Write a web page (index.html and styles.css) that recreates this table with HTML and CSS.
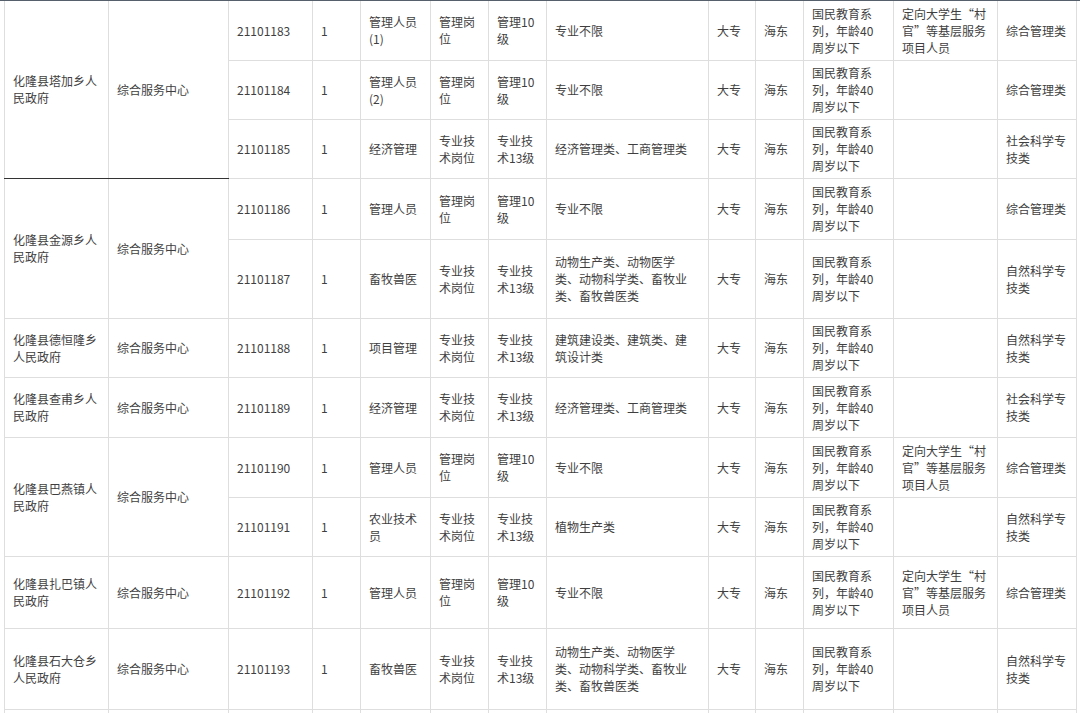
FILE: index.html
```html
<!DOCTYPE html>
<html lang="zh-CN">
<head>
<meta charset="utf-8">
<title>岗位表</title>
<link rel="stylesheet" href="styles.css">
</head>
<body>
<div class="topbar"></div>
<div class="wrap">
<table class="jobs">
<colgroup>
<col class="c1"><col class="c2"><col class="c3"><col class="c4"><col class="c5"><col class="c6"><col class="c7"><col class="c8"><col class="c9"><col class="c10"><col class="c11"><col class="c12"><col class="c13">
</colgroup>
<tbody>
<tr class="h59">
<td rowspan="3" class="grp-end">化隆县塔加乡人民政府</td>
<td rowspan="3" class="grp-end">综合服务中心</td>
<td>21101183</td><td>1</td><td>管理人员(1)</td><td>管理岗位</td><td>管理10级</td><td class="major">专业不限</td><td>大专</td><td>海东</td><td class="req">国民教育系列，年龄40周岁以下</td><td>定向大学生“村官”等基层服务项目人员</td><td>综合管理类</td>
</tr>
<tr class="h59">
<td>21101184</td><td>1</td><td>管理人员(2)</td><td>管理岗位</td><td>管理10级</td><td class="major">专业不限</td><td>大专</td><td>海东</td><td class="req">国民教育系列，年龄40周岁以下</td><td></td><td>综合管理类</td>
</tr>
<tr class="h59">
<td>21101185</td><td>1</td><td>经济管理</td><td>专业技术岗位</td><td>专业技术13级</td><td class="major">经济管理类、工商管理类</td><td>大专</td><td>海东</td><td class="req">国民教育系列，年龄40周岁以下</td><td></td><td>社会科学专技类</td>
</tr>
<tr class="h61">
<td rowspan="2">化隆县金源乡人民政府</td>
<td rowspan="2">综合服务中心</td>
<td>21101186</td><td>1</td><td>管理人员</td><td>管理岗位</td><td>管理10级</td><td class="major">专业不限</td><td>大专</td><td>海东</td><td class="req">国民教育系列，年龄40周岁以下</td><td></td><td>综合管理类</td>
</tr>
<tr class="h79">
<td>21101187</td><td>1</td><td>畜牧兽医</td><td>专业技术岗位</td><td>专业技术13级</td><td class="major">动物生产类、动物医学类、动物科学类、畜牧业类、畜牧兽医类</td><td>大专</td><td>海东</td><td class="req">国民教育系列，年龄40周岁以下</td><td></td><td>自然科学专技类</td>
</tr>
<tr class="h59">
<td>化隆县德恒隆乡人民政府</td>
<td>综合服务中心</td>
<td>21101188</td><td>1</td><td>项目管理</td><td>专业技术岗位</td><td>专业技术13级</td><td class="major">建筑建设类、建筑类、建筑设计类</td><td>大专</td><td>海东</td><td class="req">国民教育系列，年龄40周岁以下</td><td></td><td>自然科学专技类</td>
</tr>
<tr class="h60">
<td>化隆县查甫乡人民政府</td>
<td>综合服务中心</td>
<td>21101189</td><td>1</td><td>经济管理</td><td>专业技术岗位</td><td>专业技术13级</td><td class="major">经济管理类、工商管理类</td><td>大专</td><td>海东</td><td class="req">国民教育系列，年龄40周岁以下</td><td></td><td>社会科学专技类</td>
</tr>
<tr class="h60">
<td rowspan="2">化隆县巴燕镇人民政府</td>
<td rowspan="2">综合服务中心</td>
<td>21101190</td><td>1</td><td>管理人员</td><td>管理岗位</td><td>管理10级</td><td class="major">专业不限</td><td>大专</td><td>海东</td><td class="req">国民教育系列，年龄40周岁以下</td><td>定向大学生“村官”等基层服务项目人员</td><td>综合管理类</td>
</tr>
<tr class="h59">
<td>21101191</td><td>1</td><td>农业技术员</td><td>专业技术岗位</td><td>专业技术13级</td><td class="major">植物生产类</td><td>大专</td><td>海东</td><td class="req">国民教育系列，年龄40周岁以下</td><td></td><td>自然科学专技类</td>
</tr>
<tr class="h72">
<td>化隆县扎巴镇人民政府</td>
<td>综合服务中心</td>
<td>21101192</td><td>1</td><td>管理人员</td><td>管理岗位</td><td>管理10级</td><td class="major">专业不限</td><td>大专</td><td>海东</td><td class="req">国民教育系列，年龄40周岁以下</td><td>定向大学生“村官”等基层服务项目人员</td><td>综合管理类</td>
</tr>
<tr class="h81">
<td>化隆县石大仓乡人民政府</td>
<td>综合服务中心</td>
<td>21101193</td><td>1</td><td>畜牧兽医</td><td>专业技术岗位</td><td>专业技术13级</td><td class="major">动物生产类、动物医学类、动物科学类、畜牧业类、畜牧兽医类</td><td>大专</td><td>海东</td><td class="req">国民教育系列，年龄40周岁以下</td><td></td><td>自然科学专技类</td>
</tr>
<tr class="h59">
<td></td><td></td><td></td><td></td><td></td><td></td><td></td><td class="major"></td><td></td><td></td><td class="req"></td><td></td><td></td>
</tr>
</tbody>
</table>
</div>
</body>
</html>
```

FILE: styles.css
```css
html, body {
  margin: 0;
  padding: 0;
  background: #ffffff;
  overflow: hidden;
}

body {
  font-family: "Noto Sans CJK SC", "Noto Sans", sans-serif;
  font-size: 12px;
  color: #3f3f3f;
}

.topbar {
  height: 1px;
  background: #56606c;
}

.wrap {
  padding-left: 4px;
}

.jobs {
  border-collapse: collapse;
  table-layout: fixed;
  width: 1072px;
}

.jobs td {
  border: 1px solid #dedede;
  border-top-color: #e6e6e6;
  padding: 3px 8px 3px 8px;
  line-height: 17px;
  vertical-align: middle;
  text-align: left;
  word-break: break-all;
}

.jobs tr:first-child td {
  border-top: 0;
}

.jobs td.grp-end {
  border-bottom: 1px solid #333333;
}

.jobs td.major {
  padding-right: 16px;
}

.jobs td.req {
  padding-right: 12px;
}

.c1 { width: 104px; }
.c2 { width: 120px; }
.c3 { width: 84px; }
.c4 { width: 48px; }
.c5 { width: 70px; }
.c6 { width: 58px; }
.c7 { width: 58px; }
.c8 { width: 162px; }
.c9 { width: 47px; }
.c10 { width: 48px; }
.c11 { width: 90px; }
.c12 { width: 104px; }
.c13 { width: 79px; }

.h59 { height: 59px; }
.h60 { height: 60px; }
.h61 { height: 61px; }
.h72 { height: 72px; }
.h79 { height: 79px; }
.h81 { height: 81px; }
```
